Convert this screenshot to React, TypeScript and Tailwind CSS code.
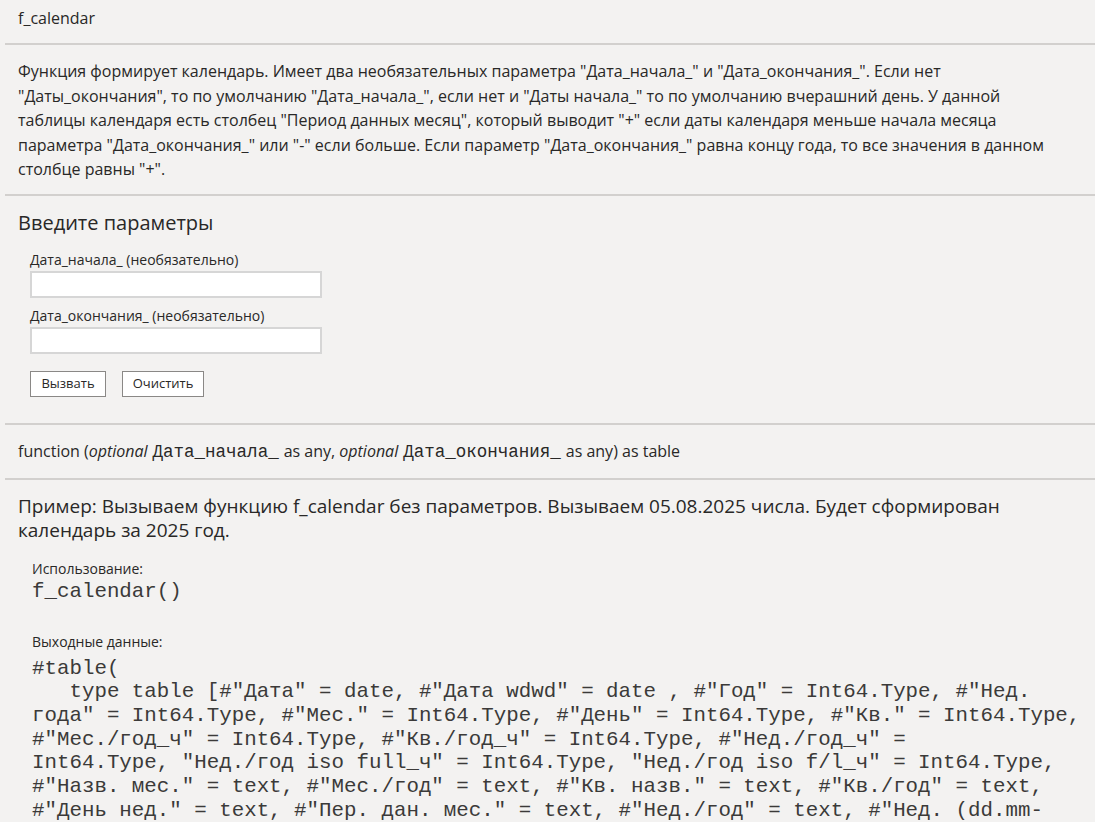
import React from 'react';

const sans = { fontFamily: '"Segoe UI", "Open Sans", "Liberation Sans", sans-serif' };
const mono = { fontFamily: '"Courier New", "Liberation Mono", monospace' };

const description = [
    'Функция формирует календарь. Имеет два необязательных параметра "Дата_начала_" и "Дата_окончания_". Если нет',
    '"Даты_окончания", то по умолчанию "Дата_начала_", если нет и "Даты начала_" то по умолчанию вчерашний день. У данной',
    'таблицы календаря есть столбец "Период данных месяц", который выводит "+" если даты календаря меньше начала месяца',
    'параметра "Дата_окончания_" или "-" если больше. Если параметр "Дата_окончания_" равна концу года, то все значения в данном',
    'столбце равны "+".',
];

const codeLines = [
    '#table(',
    '   type table [#"Дата" = date, #"Дата wdwd" = date , #"Год" = Int64.Type, #"Нед.',
    'года" = Int64.Type, #"Мес." = Int64.Type, #"День" = Int64.Type, #"Кв." = Int64.Type,',
    '#"Мес./год_ч" = Int64.Type, #"Кв./год_ч" = Int64.Type, #"Нед./год_ч" =',
    'Int64.Type, "Нед./год iso full_ч" = Int64.Type, "Нед./год iso f/l_ч" = Int64.Type,',
    '#"Назв. мес." = text, #"Мес./год" = text, #"Кв. назв." = text, #"Кв./год" = text,',
    '#"День нед." = text, #"Пер. дан. мес." = text, #"Нед./год" = text, #"Нед. (dd.mm-',
];

function Separator() {
    return <div className="ml-[5px] h-[2px] bg-[#d2d0ce]" />;
}

export default function App() {
    return (
        <div className="min-h-screen bg-[#f3f2f1] text-[#292827] overflow-hidden" style={sans}>

            {/* title */}
            <div className="px-[18px] pt-[7px] pb-[14px] text-[16px] leading-[22px]">f_calendar</div>
            <Separator />

            {/* description */}
            <div className="px-[18px] pt-[14px] pb-[12px] text-[16px] leading-[24.5px] whitespace-nowrap">
                {description.map((line, i) => (
                    <div key={i}>{line}</div>
                ))}
            </div>
            <Separator />

            {/* parameters form */}
            <div className="px-[18px] pt-[13px] pb-[26px]">
                <div className="text-[20px] leading-[27px]">Введите параметры</div>
                <div className="pl-[12px] pt-[14px] flex flex-col">
                    <label className="text-[14px] leading-[19px]">Дата_начала_ (необязательно)</label>
                    <input className="mt-[2px] w-[292px] h-[27px] bg-white border-2 border-[#d6d6d6] outline-none" />
                    <label className="mt-[8px] text-[14px] leading-[19px]">Дата_окончания_ (необязательно)</label>
                    <input className="mt-[2px] w-[292px] h-[27px] bg-white border-2 border-[#d6d6d6] outline-none" />
                    <div className="mt-[17px] flex gap-[16px]">
                        <button className="h-[26px] w-[76px] bg-white border border-[#8a8886] text-[13px]">Вызвать</button>
                        <button className="h-[26px] w-[82px] bg-white border border-[#8a8886] text-[13px]">Очистить</button>
                    </div>
                </div>
            </div>
            <Separator />

            {/* signature */}
            <div className="px-[18px] pt-[14px] pb-[14px] text-[16px] leading-[24px] whitespace-nowrap">
                function (<i>optional</i>
                <span className="px-[5px] text-[17.5px]" style={mono}>Дата_начала_</span>
                as any, <i>optional</i>
                <span className="px-[5px] text-[17.5px]" style={mono}>Дата_окончания_</span>
                as any) as table
            </div>
            <Separator />

            {/* example */}
            <div className="px-[18px] pt-[14px]">
                <div className="text-[19px] leading-[24.5px] whitespace-nowrap">
                    <div>Пример: Вызываем функцию f_calendar без параметров. Вызываем 05.08.2025 числа. Будет сформирован</div>
                    <div>календарь за 2025 год.</div>
                </div>
                <div className="pl-[14px] pt-[16px]">
                    <div className="text-[14px] leading-[19px]">Использование:</div>
                    <div className="mt-[2px] text-[20.8px] leading-[24px] text-[#3b3a39]" style={mono}>f_calendar()</div>
                    <div className="mt-[28px] text-[14px] leading-[19px]">Выходные данные:</div>
                    <pre className="mt-[6px] text-[20.8px] leading-[23.7px] whitespace-pre text-[#3b3a39]" style={mono}>
                        {codeLines.join('\n')}
                    </pre>
                </div>
            </div>

        </div>
    );
}
